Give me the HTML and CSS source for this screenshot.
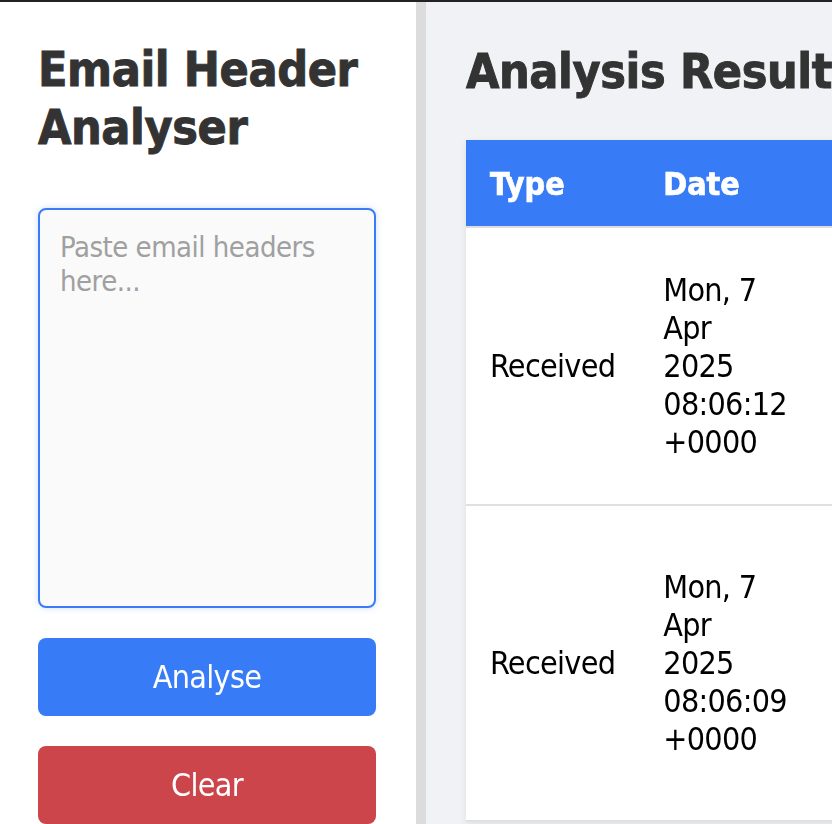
FILE: index.html
```html
<!DOCTYPE html>
<html lang="en">
<head>
<meta charset="utf-8">
<title>Email Header Analyser</title>
<link rel="stylesheet" href="styles.css">
</head>
<body>
<div class="app">
  <aside class="sidebar">
    <h1 class="title">Email Header Analyser</h1>
    <textarea class="input" placeholder="Paste email headers here..." autofocus></textarea>
    <button class="btn btn-primary" type="button">Analyse</button>
    <button class="btn btn-danger" type="button">Clear</button>
  </aside>
  <main class="results">
    <h2 class="results-title">Analysis Results</h2>
    <table class="hops">
      <thead>
        <tr><th>Type</th><th>Date</th><th>From</th><th>By</th><th>With</th><th>Delay</th></tr>
      </thead>
      <tbody>
        <tr>
          <td>Received</td>
          <td>Mon, 7 Apr 2025 08:06:12 +0000</td>
          <td class="nowrap">mail-sor-f41.google.com<br>(mail-sor-f41.google.com.<br>[209.85.220.41])<br>by mx.google.com<br>with SMTPS id<br>a640c23a62f3a-ac7d</td>
          <td class="nowrap">mx.google.com</td>
          <td class="nowrap">SMTPS</td>
          <td class="nowrap">0s</td>
        </tr>
        <tr>
          <td>Received</td>
          <td>Mon, 7 Apr 2025 08:06:09 +0000</td>
          <td class="nowrap">mail-ej1-f41.google.com<br>(mail-ej1-f41.google.com.<br>[209.85.218.41])<br>by smtp.gmail.com<br>with SMTP id<br>a640c23a62f3a-ac7d<br>for &lt;user@example.com&gt;</td>
          <td class="nowrap">smtp.gmail.com</td>
          <td class="nowrap">SMTP</td>
          <td class="nowrap">3s</td>
        </tr>
      </tbody>
    </table>
  </main>
</div>
</body>
</html>
```
FILE: styles.css
```css
html, body {
  margin: 0;
  padding: 0;
  overflow: hidden;
}
body {
  font-family: "DejaVu Sans Condensed", "DejaVu Sans", sans-serif;
  font-stretch: condensed;
  color: #000;
  background: #f0f2f5;
}
.app {
  display: flex;
  min-height: 100vh;
  border-top: 2px solid #222;
}
.sidebar {
  flex: none;
  width: 416px;
  box-sizing: border-box;
  padding: 38px 40px 38px 38px;
  background: #fff;
  display: flex;
  flex-direction: column;
}
.title {
  margin: 0 0 52px;
  font-size: 48px;
  line-height: 58px;
  font-weight: bold;
  color: #333;
  letter-spacing: -0.4px;
  -webkit-text-stroke: 0.9px #333;
}
.input {
  display: block;
  box-sizing: border-box;
  width: 100%;
  height: 400px;
  margin: 0 0 30px;
  padding: 20px 20px 14px;
  border: 2px solid #3a7cf6;
  border-radius: 8px;
  background: #fafafa;
  font-family: inherit;
  font-stretch: condensed;
  font-size: 29px;
  line-height: 34px;
  letter-spacing: -0.5px;
  color: #333;
  caret-color: #3a7cf6;
  resize: none;
  outline: none;
  box-shadow: 0 0 6px rgba(58, 124, 246, 0.25);
}
.input::placeholder {
  color: #a0a0a0;
}
.btn {
  display: block;
  width: 100%;
  height: 78px;
  border: none;
  border-radius: 8px;
  color: #fff;
  font-family: inherit;
  font-stretch: condensed;
  font-size: 32px;
  line-height: 38px;
  letter-spacing: -0.7px;
  padding: 0;
  margin: 0 0 30px;
}
.btn-primary { background: #377cf6; }
.btn-danger { background: #cc454b; }
.results {
  flex: 1;
  min-width: 0;
  overflow: hidden;
  border-left: 10px solid #dcdcdc;
  padding: 40px;
  background: #f0f2f5;
}
.results-title {
  margin: 0 0 40px;
  font-size: 48px;
  line-height: 58px;
  font-weight: bold;
  color: #333;
  white-space: nowrap;
  letter-spacing: -0.4px;
  -webkit-text-stroke: 0.9px #333;
}
.hops {
  width: 100%;
  border-collapse: collapse;
  background: #fff;
  box-shadow: 0 2px 8px rgba(0, 0, 0, 0.08);
  font-size: 32px;
  line-height: 38px;
}
.hops th {
  background: #377cf6;
  color: #fff;
  text-align: left;
  font-weight: bold;
  padding: 25px 24px 23px;
  border-bottom: 2px solid #ddd;
  -webkit-text-stroke: 0.7px #fff;
}
.hops td {
  padding: 24px;
  text-align: left;
  vertical-align: middle;
  letter-spacing: -0.7px;
  border-bottom: 2px solid #e0e0e0;
}
.hops .nowrap {
  white-space: nowrap;
}
```
